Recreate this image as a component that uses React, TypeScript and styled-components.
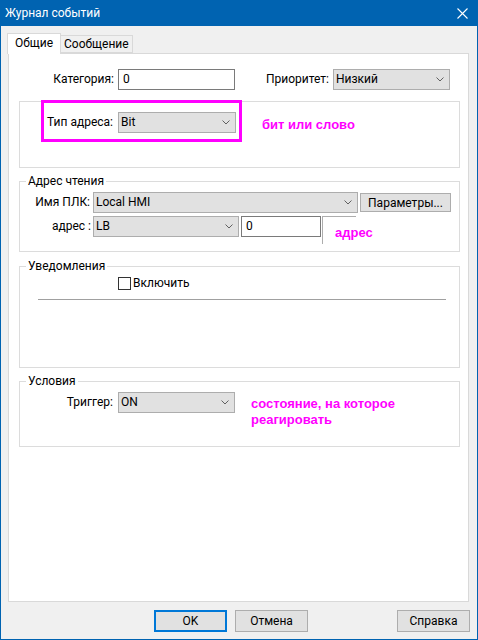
import React from 'react';
import styled, {createGlobalStyle} from 'styled-components';

const GlobalStyle = createGlobalStyle`
    html, body {
        margin: 0;
        padding: 0;
        background: #f0f0f0;
    }
    body {
        font-family: Roboto, "Noto Sans", "Liberation Sans", sans-serif;
        font-size: 12px;
        color: #000;
    }
    * {
        box-sizing: border-box;
    }
`;

const Window = styled.div`
    width: 478px;
    height: 640px;
    display: flex;
    flex-direction: column;
    background: #f0f0f0;
    border: 1px solid #0063b1;
    border-top: 0;
`;

const TitleBar = styled.div`
    height: 26px;
    margin: 0 -1px;
    padding: 0 10px 0 5px;
    display: flex;
    align-items: center;
    justify-content: space-between;
    background: #0063b1;
    color: #fff;
    font-size: 12px;
`;

const Body = styled.div`
    flex: 1;
    padding: 7px 8px 0 6px;
    display: flex;
    flex-direction: column;
`;

const TabStrip = styled.div`
    height: 20px;
    display: flex;
    align-items: flex-end;
    position: relative;
    z-index: 1;
`;

const Tab = styled.div<{$active?: boolean}>`
    height: ${(p) => (p.$active ? '21px' : '18px')};
    margin-bottom: ${(p) => (p.$active ? '-1px' : '0')};
    padding: ${(p) => (p.$active ? '2px 7px 0 7px' : '0 3px')};
    display: flex;
    align-items: ${(p) => (p.$active ? 'flex-start' : 'center')};
    background: ${(p) => (p.$active ? '#fff' : '#f0f0f0')};
    border: 1px solid #d9d9d9;
    border-bottom: ${(p) => (p.$active ? '0' : '1px solid #d9d9d9')};
    border-left-width: ${(p) => (p.$active ? '1px' : '0')};
`;

const Panel = styled.div`
    height: 549px;
    margin-left: 1px;
    padding: 15px 8px 0 10px;
    background: #fff;
    border: 1px solid #d9d9d9;
    display: flex;
    flex-direction: column;
`;

const Row = styled.div<{$top?: number}>`
    display: flex;
    align-items: flex-start;
    margin-top: ${(p) => p.$top ?? 0}px;
`;

const Label = styled.div<{$width: number; $gap?: number}>`
    width: ${(p) => p.$width}px;
    margin-right: ${(p) => p.$gap ?? 4}px;
    height: 21px;
    line-height: 20px;
    text-align: right;
    flex-shrink: 0;
    white-space: nowrap;
`;

const TextInput = styled.div<{$width: number}>`
    width: ${(p) => p.$width}px;
    height: 21px;
    padding-left: 4px;
    line-height: 19px;
    border: 1px solid #7a7a7a;
    background: #fff;
    flex-shrink: 0;
`;

const SelectBox = styled.div<{$width: number}>`
    width: ${(p) => p.$width}px;
    height: 21px;
    padding: 0 5px 0 2px;
    display: flex;
    align-items: center;
    justify-content: space-between;
    border: 1px solid #adadad;
    background: #e1e1e1;
    flex-shrink: 0;
    line-height: 19px;
`;

const Button = styled.div<{$primary?: boolean; $width?: number; $height?: number}>`
    width: ${(p) => p.$width ?? 73}px;
    height: ${(p) => p.$height ?? 22}px;
    display: flex;
    align-items: center;
    justify-content: center;
    background: #e1e1e1;
    border: ${(p) => (p.$primary ? '2px solid #0078d7' : '1px solid #adadad')};
    flex-shrink: 0;
`;

const Group = styled.div<{$top: number; $height: number}>`
    position: relative;
    margin-top: ${(p) => p.$top}px;
    height: ${(p) => p.$height}px;
    padding: ${(p) => (p.$top ? '10px' : '9px')} 0 0 0;
    border: 1px solid #dcdcdc;
`;

const Caption = styled.div`
    position: absolute;
    left: 6px;
    top: -9px;
    padding: 0 2px;
    line-height: 16px;
    background: #fff;
`;

const Highlight = styled.div`
    position: absolute;
    left: 21px;
    top: -2px;
    width: 201px;
    height: 42px;
    border: 3px solid #ff00ff;
    pointer-events: none;
`;

const Note = styled.div<{$left: number; $top?: number}>`
    margin-left: ${(p) => p.$left}px;
    margin-top: ${(p) => p.$top ?? 0}px;
    color: #ff00ff;
    font-family: "Liberation Sans", Arial, sans-serif;
    font-weight: bold;
    font-size: 13px;
    line-height: 16px;
    white-space: nowrap;
`;

const Stub = styled.div`
    width: 34px;
    height: 28px;
    margin-left: 1px;
    padding: 8px 0 0 12px;
    border-top: 1px solid #adadad;
    border-left: 1px solid #adadad;
    overflow: visible;
`;

const CheckBox = styled.div`
    width: 13px;
    height: 13px;
    margin: 0 2px 0 98px;
    border: 1px solid #333;
    background: #fff;
    flex-shrink: 0;
`;

const CheckLabel = styled.div`
    line-height: 13px;
`;

const Separator = styled.div`
    margin: 9px 0 0 18px;
    width: 408px;
    height: 1px;
    background: #a0a0a0;
`;

const ButtonBar = styled.div`
    margin-top: 8px;
    padding-left: 147px;
    display: flex;
    gap: 8px;
`;

const Spacer = styled.div`
    flex: 1;
`;

const Chevron = () => (
    <svg width='8' height='5' viewBox='0 0 8 5'>
        <path d='M0.5 0.5 L4 4 L7.5 0.5' fill='none' stroke='#606060' strokeWidth='1'/>
    </svg>
);

const CloseIcon = () => (
    <svg width='11' height='11' viewBox='0 0 11 11'>
        <path d='M0.5 0.5 L10.5 10.5 M10.5 0.5 L0.5 10.5' stroke='#fff' strokeWidth='1.1'/>
    </svg>
);

const Select = ({width, value}: {width: number; value: string}) => (
    <SelectBox $width={width}>
        <span>{value}</span>
        <Chevron/>
    </SelectBox>
);

export default function App() {
    return (
        <>
            <GlobalStyle/>
            <Window>
                <TitleBar>
                    <span>Журнал событий</span>
                    <CloseIcon/>
                </TitleBar>
                <Body>
                    <TabStrip>
                        <Tab $active={true}>Общие</Tab>
                        <Tab>Сообщение</Tab>
                    </TabStrip>
                    <Panel>
                        <Row>
                            <Label $width={95} $gap={4}>Категория:</Label>
                            <TextInput $width={117}>0</TextInput>
                            <Label $width={94} $gap={4}>Приоритет:</Label>
                            <Select width={117} value='Низкий'/>
                        </Row>

                        <Group $top={11} $height={67}>
                            <Highlight/>
                            <Row>
                                <Label $width={93} $gap={5}>Тип адреса:</Label>
                                <Select width={118} value='Bit'/>
                                <Note $left={26} $top={5}>бит или слово</Note>
                            </Row>
                        </Group>

                        <Group $top={13} $height={71}>
                            <Caption>Адрес чтения</Caption>
                            <Row>
                                <Label $width={70} $gap={3}>Имя ПЛК:</Label>
                                <Select width={265} value='Local HMI'/>
                                <Button $width={91} $height={19} style={{marginLeft: 2, marginTop: 1}}>
                                    Параметры...
                                </Button>
                            </Row>
                            <Row $top={3}>
                                <Label $width={71} $gap={2}>адрес :</Label>
                                <Select width={146} value='LB'/>
                                <TextInput $width={80} style={{marginLeft: 2}}>0</TextInput>
                                <Stub>
                                    <Note $left={0}>адрес</Note>
                                </Stub>
                            </Row>
                        </Group>

                        <Group $top={14} $height={102}>
                            <Caption>Уведомления</Caption>
                            <Row>
                                <CheckBox/>
                                <CheckLabel>Включить</CheckLabel>
                            </Row>
                            <Separator/>
                        </Group>

                        <Group $top={13} $height={66}>
                            <Caption>Условия</Caption>
                            <Row>
                                <Label $width={93} $gap={5}>Триггер:</Label>
                                <Select width={117} value='ON'/>
                                <Note $left={16} $top={4}>
                                    состояние, на которое
                                    <br/>
                                    реагировать
                                </Note>
                            </Row>
                        </Group>
                    </Panel>
                    <ButtonBar>
                        <Button $primary={true}>OK</Button>
                        <Button>Отмена</Button>
                        <Spacer/>
                        <Button style={{marginRight: -1}}>Справка</Button>
                    </ButtonBar>
                </Body>
            </Window>
        </>
    );
}
